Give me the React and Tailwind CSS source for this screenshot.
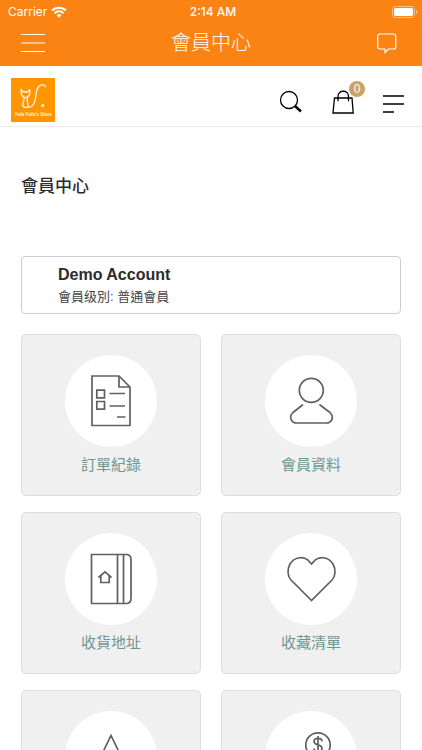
const sans = "font-['Liberation_Sans','Noto_Sans_CJK_TC',sans-serif]";

const menuItems = [
  { id: "orders", label: "訂單紀錄", Icon: OrderIcon },
  { id: "profile", label: "會員資料", Icon: ProfileIcon },
  { id: "address", label: "收貨地址", Icon: AddressIcon },
  { id: "wishlist", label: "收藏清單", Icon: HeartIcon },
  { id: "reviews", label: "我的評價", Icon: StarIcon },
  { id: "credits", label: "購物金", Icon: CreditIcon },
];

function IconFrame({ children }) {
  return (
    <svg
      width="92"
      height="92"
      viewBox="0 0 92 92"
      fill="none"
      stroke="#606060"
      strokeWidth="1.7"
      aria-hidden="true"
    >
      {children}
    </svg>
  );
}

function OrderIcon() {
  return (
    <IconFrame>
      <path d="M27 21h27l11 11v38.500H27z" />
      <path d="M54 21v11h11" />
      <path d="M31.800 35.200h7.700v7.700h-7.700zM31.800 46.500h7.700v7.700h-7.700z" />
      <path d="M44.500 38.500h15.500M44.500 51h15.500M52 62h8.500" />
    </IconFrame>
  );
}

function ProfileIcon() {
  return (
    <IconFrame>
      <circle cx="46.300" cy="35.300" r="12" />
      <path
        d="M37.500 50 28 57.500c-3 2.800-2.500 6-1.500 7.800 1.200 2.200 3 2.700 5 2.700h30c2 0 3.800-.5 5-2.700 1-1.800 1.300-5-1.500-7.800L55 50"
        strokeLinecap="round"
      />
    </IconFrame>
  );
}

function AddressIcon() {
  return (
    <IconFrame>
      <path d="M26.500 21.500H61q5 0 5 5v39q0 5-5 5H26.500z" />
      <path d="M52.500 21.500v49M58.500 21.500v49" />
      <path d="M33.500 44.500 40 38.800l6.500 5.700M35.800 43v6.500h8.400V43" />
    </IconFrame>
  );
}

function HeartIcon() {
  return (
    <IconFrame>
      <path d="M46.500 67.500 26 47C22.500 43.500 22 36.500 25 31c3.500-6 12-8.800 18-3.800l3.500 3.800 3.500-3.800c6-5 14.500-2.200 18 3.800 3 5.500 2.500 12.500-1 16z" />
    </IconFrame>
  );
}

function StarIcon() {
  return (
    <IconFrame>
      <path d="m46 24.500 8 16.500 17 3-12 12 2 17-15-8-15 8 2-17-12-12 17-3z" />
    </IconFrame>
  );
}

function CreditIcon() {
  return (
    <IconFrame>
      <circle cx="53" cy="34" r="12.200" />
      <path d="M57 30.500c0-2-1.800-3.200-4-3.200s-4 1.200-4 3.200c0 4.500 8 2.300 8 7 0 2-1.800 3.200-4 3.200s-4-1.200-4-3.200M53 25v18" />
      <path d="M22 54h10l8 4h10c4 0 4 6 0 6H39M50 61l14-6c4-1 6 3 3 5L50 72H22" />
    </IconFrame>
  );
}

function StatusBar() {
  return (
    <div className="flex h-5 items-center justify-between pt-1 pr-1 pl-2 font-['Inter',sans-serif] text-xs">
      <div className="flex flex-1 items-center gap-1">
        <span>Carrier</span>
        <svg width="16" height="12" viewBox="0 0 16 12" aria-hidden="true">
          <g fill="none" stroke="white" strokeWidth="2">
            <path d="M1 4.500a10 10 0 0 1 14 0" />
            <path d="M3.600 7.200a6.200 6.200 0 0 1 8.800 0" />
          </g>
          <path d="M5.600 9.200a3.400 3.400 0 0 1 4.800 0L8 11.700z" fill="white" />
        </svg>
      </div>
      <span className="text-xs font-medium">2:14 AM</span>
      <div className="flex flex-1 justify-end">
        <svg width="26" height="12" viewBox="0 0 26 12" aria-hidden="true">
          <rect
            x="0.500"
            y="0.500"
            width="22"
            height="11"
            rx="3"
            fill="none"
            stroke="white"
            strokeOpacity=".5"
          />
          <rect x="2" y="2" width="19" height="8" rx="1.500" fill="white" />
          <path d="M24 4v4q1.500-.5 1.500-2T24 4" fill="white" opacity=".5" />
        </svg>
      </div>
    </div>
  );
}

function AppBar() {
  return (
    <div className="flex h-[46px] items-center justify-between px-5">
      <button type="button" aria-label="選單">
        <svg width="26" height="20" viewBox="0 0 26 20" aria-hidden="true">
          <path
            d="M1 1.500h24M1 10h24M1 18.500h24"
            stroke="white"
            strokeWidth="1"
          />
        </svg>
      </button>
      <span className="text-xl font-light">會員中心</span>
      <button type="button" aria-label="訊息" className="pr-1">
        <svg width="22" height="22" viewBox="0 0 22 22" aria-hidden="true">
          <path
            d="M4 2h13.500q2.300 0 2.300 2.300v10.400q0 2.300-2.300 2.300h-5L9 20.500V17H4q-2.300 0-2.300-2.300V4.300Q1.700 2 4 2z"
            fill="none"
            stroke="white"
            strokeWidth="1.200"
          />
        </svg>
      </button>
    </div>
  );
}

function Logo() {
  return (
    <a href="#home" aria-label="Fefe Fufu's Store">
      <svg width="44" height="44" viewBox="0 0 44 44" aria-hidden="true">
        <rect width="44" height="44" fill="#ff9500" />
        <g
          fill="none"
          stroke="#fff3df"
          strokeWidth="1.300"
          strokeLinecap="round"
          strokeLinejoin="round"
        >
          <path d="M10 11.500 12.500 14h4l2.300-2.300c.4 3.500 0 6.300-2.800 7.600h-3c-2.800-1.500-3.300-4.300-3-7.800z" />
          <path d="M13 19.500c.6 3.500-1.800 6-1.300 8 .6 2.300 3.500 2 5.300 1.700.4-2.700-1.200-6-.8-9.500" />
          <path d="M17 29.200c8-.4 7.300-9.700 8.300-14.700.8-4.500 2.500-7.200 5.400-7.500 1.900-.2 3.300.5 3.800 1.800" />
        </g>
        <circle cx="31.800" cy="27.500" r="1.600" fill="#fff3df" />
        <text
          x="22.500"
          y="38"
          textAnchor="middle"
          fontFamily="Liberation Sans, sans-serif"
          fontSize="4.500"
          fontWeight="bold"
          fill="#fff3df"
        >
          Fefe Fufu's Store
        </text>
      </svg>
    </a>
  );
}

function StoreHeader() {
  return (
    <div className="flex items-center justify-between border-b border-[#ebebeb] pt-3 pr-[17px] pb-1 pl-[11px]">
      <Logo />
      <div className="flex items-center gap-7 pt-1">
        <button type="button" aria-label="搜尋">
          <svg width="24" height="24" viewBox="0 0 24 24" aria-hidden="true">
            <circle
              cx="10"
              cy="10"
              r="8.500"
              fill="none"
              stroke="black"
              strokeWidth="1.300"
            />
            <path d="m16 16 6 5.500" stroke="black" strokeWidth="2.400" />
          </svg>
        </button>
        <button type="button" aria-label="購物車" className="relative">
          <svg width="24" height="26" viewBox="0 0 24 26" aria-hidden="true">
            <g fill="none" stroke="black" strokeWidth="1.300">
              <path d="M3.500 9h17.500l1.200 15H2z" />
              <path d="M7 12.300V7.500C7 .500 17.500.500 17.500 7.500v4.800" />
            </g>
          </svg>
          <span className="absolute -top-2 -right-[10px] flex size-4 items-center justify-center rounded-full bg-[#cca366] text-xs text-white">
            0
          </span>
        </button>
        <button type="button" aria-label="商店選單" className="pt-1">
          <svg width="22" height="18" viewBox="0 0 22 18" aria-hidden="true">
            <path
              d="M0 1h21M0 9h21M0 17h11"
              stroke="black"
              strokeWidth="1.500"
            />
          </svg>
        </button>
      </div>
    </div>
  );
}

function MenuCard({ id, label, Icon }) {
  return (
    <a
      href={`#${id}`}
      className="flex flex-col items-center rounded-[5px] border border-[#dedede] bg-[#f0f0f0] py-5 text-[#6f9693]"
    >
      <span className="rounded-full bg-white">
        <Icon />
      </span>
      <span className="mt-2 text-[15px] leading-5">{label}</span>
    </a>
  );
}

export default function App() {
  return (
    <div className={`flex h-screen flex-col bg-white text-[#2b2b2b] ${sans}`}>
      <header className="shrink-0 bg-[#fb8314] text-white">
        <StatusBar />
        <AppBar />
      </header>

      <div className="min-h-0 flex-1 overflow-y-auto [scrollbar-width:none]">
        <StoreHeader />

        <main className="px-[21px] pb-5">
          <h1 className="pt-12 text-[17px] leading-6 font-medium">
            會員中心
          </h1>

          {/* Account summary */}
          <section className="mt-[57px] rounded border border-[#cccccc] pt-[7px] pb-[5px] pl-9">
            <p className="text-base leading-[22px] font-bold">Demo Account</p>
            <p className="text-[13px] leading-[22px] text-[#444444]">
              會員级別: 普通會員
            </p>
          </section>

          <nav className="mt-5 grid grid-cols-2 gap-x-5 gap-y-4">
            {menuItems.map((item) => (
              <MenuCard key={item.id} {...item} />
            ))}
          </nav>
        </main>
      </div>
    </div>
  );
}
